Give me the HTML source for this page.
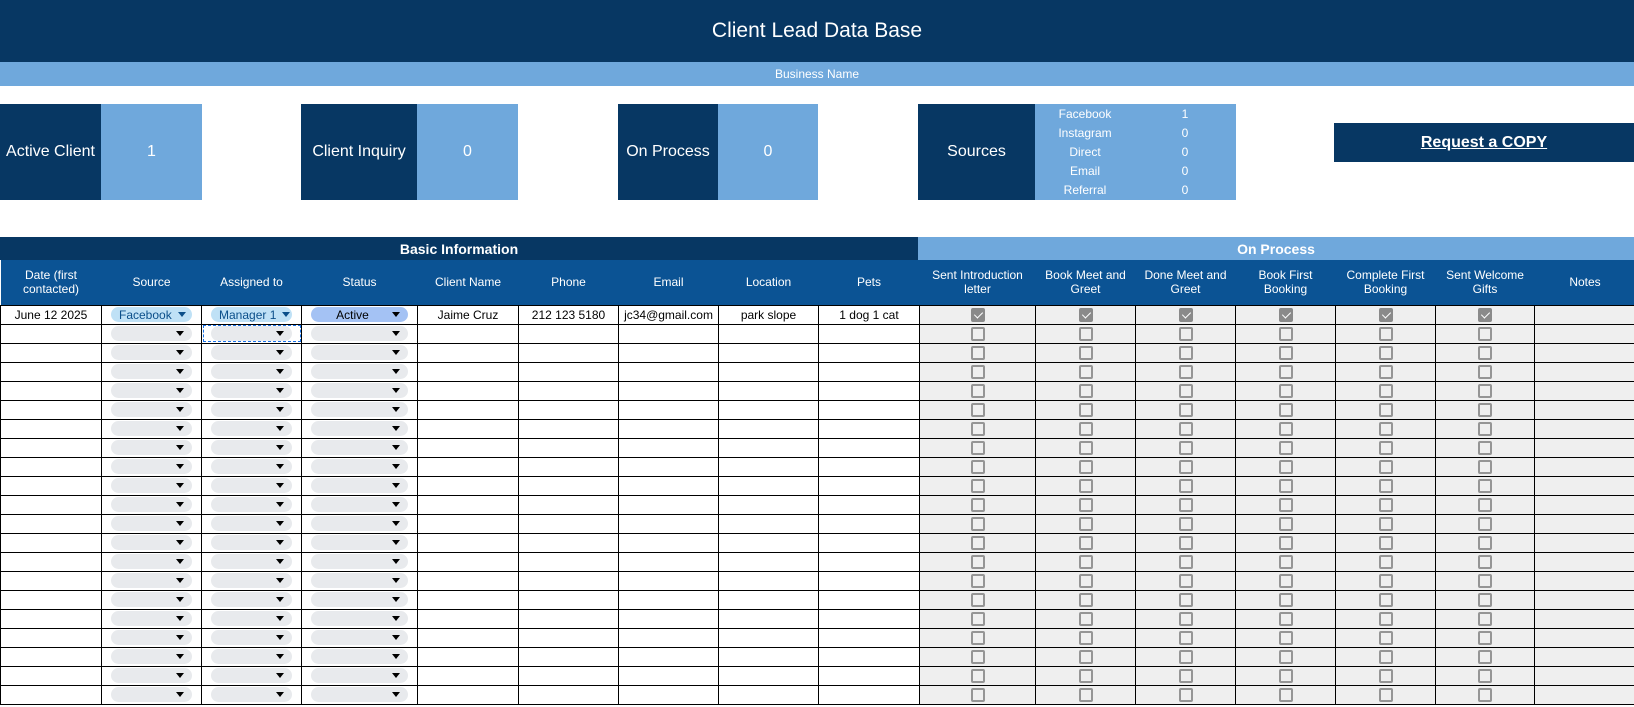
<!DOCTYPE html>
<html><head><meta charset="utf-8"><style>
*{margin:0;padding:0;box-sizing:border-box}
body{width:1634px;height:707px;overflow:hidden;background:#fff;font-family:"Liberation Sans",Arial,sans-serif;position:relative}
.a{position:absolute;display:flex;align-items:center;justify-content:center;color:#fff}
.dk{background:#073763}.lt{background:#6fa8dc}
table{position:absolute;left:0;top:260px;border-collapse:collapse;table-layout:fixed;width:1635px}
td{border:1px solid #000;height:19px;font-size:12px;text-align:center;padding:0;white-space:nowrap;overflow:hidden}
th{background:#0b5394;color:#fff;font-size:12px;font-weight:normal;height:45px;border:none;line-height:14px}
td.g{background:#efefef}
.cb{display:inline-block;width:14px;height:14px;border:2px solid #959595;border-radius:2px;vertical-align:middle;margin-top:-1px}
.cb.on{background:#8a8a8a;border-color:#8a8a8a;position:relative}
.cb.on:after{content:"";position:absolute;left:3px;top:0px;width:4px;height:7px;border:solid #fff;border-width:0 1.5px 1.5px 0;transform:rotate(45deg)}
.ch{display:flex;align-items:center;margin:0 9px;height:15px;border-radius:8px;background:#e8eaed;padding:0 8px 0 8px;font-size:12px}
.ch:after{content:"";border-left:4px solid transparent;border-right:4px solid transparent;border-top:5px solid #000;margin-left:auto;flex:none}
.ch span{flex:1;text-align:center;margin-right:6px}
.fb{background:#bfe1f6;color:#0b4f8a}.fb:after{border-top-color:#0b4f8a}
.ac{background:#a4c2f4}
</style></head><body>
<div class="a dk" style="left:0;top:0;width:1634px;height:62px;font-size:21px">Client Lead Data Base</div>
<div class="a lt" style="left:0;top:62px;width:1634px;height:24px;font-size:12px">Business Name</div>

<div class="a dk" style="left:0;top:104px;width:101px;height:96px;font-size:16px">Active Client</div>
<div class="a lt" style="left:101px;top:104px;width:101px;height:96px;font-size:16px">1</div>
<div class="a dk" style="left:301px;top:104px;width:116px;height:96px;font-size:16px">Client Inquiry</div>
<div class="a lt" style="left:417px;top:104px;width:101px;height:96px;font-size:16px">0</div>
<div class="a dk" style="left:618px;top:104px;width:100px;height:96px;font-size:16px">On Process</div>
<div class="a lt" style="left:718px;top:104px;width:100px;height:96px;font-size:16px">0</div>
<div class="a dk" style="left:918px;top:104px;width:117px;height:96px;font-size:16px">Sources</div>
<div class="lt" style="position:absolute;left:1035px;top:104px;width:201px;height:96px;color:#fff;font-size:12px">
<div style="display:flex;height:19px;align-items:center"><span style="width:100px;text-align:center">Facebook</span><span style="width:100px;text-align:center">1</span></div>
<div style="display:flex;height:19px;align-items:center"><span style="width:100px;text-align:center">Instagram</span><span style="width:100px;text-align:center">0</span></div>
<div style="display:flex;height:19px;align-items:center"><span style="width:100px;text-align:center">Direct</span><span style="width:100px;text-align:center">0</span></div>
<div style="display:flex;height:19px;align-items:center"><span style="width:100px;text-align:center">Email</span><span style="width:100px;text-align:center">0</span></div>
<div style="display:flex;height:19px;align-items:center"><span style="width:100px;text-align:center">Referral</span><span style="width:100px;text-align:center">0</span></div>
</div>
<div class="a dk" style="left:1334px;top:123px;width:300px;height:39px;font-size:16px;font-weight:bold;text-decoration:underline">Request a COPY</div>

<div class="a dk" style="left:0;top:237px;width:918px;height:23px;font-size:14px;font-weight:bold">Basic Information</div>
<div class="a lt" style="left:918px;top:237px;width:716px;height:23px;font-size:14px;font-weight:bold">On Process</div>

<table id="t">
<colgroup><col style="width:101px"><col style="width:100px"><col style="width:100px"><col style="width:116px"><col style="width:101px"><col style="width:100px"><col style="width:100px"><col style="width:100px"><col style="width:101px"><col style="width:116px"><col style="width:100px"><col style="width:100px"><col style="width:100px"><col style="width:100px"><col style="width:99px"><col style="width:101px"></colgroup>
<tr><th>Date (first<br>contacted)</th><th>Source</th><th>Assigned to</th><th>Status</th><th>Client Name</th><th>Phone</th><th>Email</th><th>Location</th><th>Pets</th><th>Sent Introduction<br>letter</th><th>Book Meet and<br>Greet</th><th>Done Meet and<br>Greet</th><th>Book First<br>Booking</th><th>Complete First<br>Booking</th><th>Sent Welcome<br>Gifts</th><th>Notes</th></tr>
<tr><td>June 12 2025</td><td><div class="ch fb"><span>Facebook</span></div></td><td><div class="ch fb"><span>Manager 1</span></div></td><td><div class="ch ac"><span>Active</span></div></td><td>Jaime Cruz</td><td>212 123 5180</td><td>jc34@gmail.com</td><td>park slope</td><td>1 dog 1 cat</td>
<td class="g"><i class="cb on"></i></td><td class="g"><i class="cb on"></i></td><td class="g"><i class="cb on"></i></td><td class="g"><i class="cb on"></i></td><td class="g"><i class="cb on"></i></td><td class="g"><i class="cb on"></i></td><td class="g"></td></tr>
</table>
<script>
var t=document.getElementById('t');
for(var i=0;i<20;i++){var r=t.insertRow();var h='<td></td><td><div class="ch"></div></td><td'+(i==0?' style="outline:1px dashed #1a73e8;outline-offset:-2px"':'')+'><div class="ch"></div></td><td><div class="ch"></div></td><td></td><td></td><td></td><td></td><td></td>';
for(var j=0;j<6;j++)h+='<td class="g"><i class="cb"></i></td>';h+='<td class="g"></td>';r.innerHTML=h;}
</script>
</body></html>
